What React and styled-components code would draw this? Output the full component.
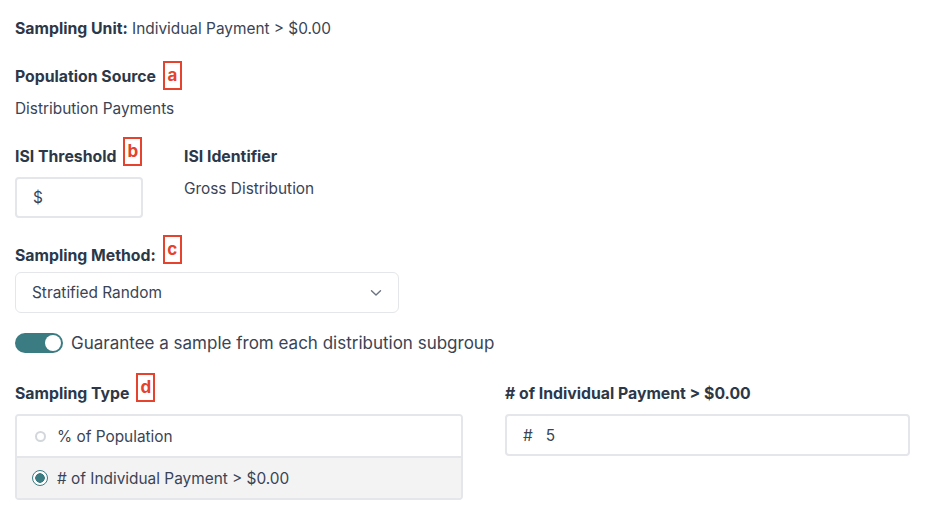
import styled, { createGlobalStyle } from "styled-components";

const GlobalStyle = createGlobalStyle`
  body {
    margin: 0;
    background: #ffffff;
    font-family: Inter, "Noto Sans", sans-serif;
    color: #3a4454;
  }
`;

const Page = styled.div`
  padding: 19px 15px 0;
  width: 895px;
`;

const Line = styled.div`
  font-size: 15.4px;
  line-height: 20px;
  margin-top: ${(p) => p.$top || 0}px;
`;

const Strong = styled.span`
  font-weight: 700;
  font-size: 15.8px;
  color: #2c3848;
`;

const Label = styled.div`
  position: relative;
  display: inline-block;
  font-size: 15.8px;
  line-height: 20px;
  font-weight: 700;
  color: #2c3848;
  margin-top: ${(p) => p.$top || 0}px;
`;

const Badge = styled.span`
  position: absolute;
  left: calc(100% + ${(p) => p.$gap || 7}px);
  top: ${(p) => p.$offset}px;
  width: 15px;
  height: 25px;
  border: 2px solid #e5432d;
  color: #e5432d;
  font-size: 17px;
  font-weight: 700;
  line-height: 24px;
  text-align: center;
`;

const Pair = styled.div`
  display: flex;
  gap: 41px;
  margin-top: 28px;
`;

const Field = styled.div`
  display: flex;
  flex-direction: column;
  align-items: flex-start;
`;

const TextBox = styled.div`
  box-sizing: border-box;
  display: flex;
  align-items: center;
  gap: 13px;
  width: ${(p) => p.$width || "100%"};
  height: ${(p) => p.$height || 41}px;
  margin-top: ${(p) => p.$top ?? 10}px;
  padding: 0 16px;
  border: 2px solid #e4e6ea;
  border-radius: 4px;
  font-size: 15.4px;
  color: #3a4454;
`;

const Select = styled.div`
  box-sizing: border-box;
  display: flex;
  align-items: center;
  justify-content: space-between;
  width: 384px;
  height: 41px;
  margin-top: 6px;
  padding: 0 16px 0 16px;
  border: 1px solid #e4e6ea;
  border-radius: 6px;
  font-size: 15.4px;
  color: #3a4454;
`;

const ToggleRow = styled.div`
  display: flex;
  align-items: center;
  gap: 8px;
  margin-top: 19px;
  font-size: 17px;
  line-height: 22px;
  color: #3a4454;
`;

const Track = styled.div`
  display: flex;
  align-items: center;
  justify-content: ${(p) => (p.$on ? "flex-end" : "flex-start")};
  box-sizing: border-box;
  width: 48px;
  height: 20px;
  padding: 2px;
  border-radius: 10px;
  background: ${(p) => (p.$on ? "#3b7b82" : "#d1d5db")};
`;

const Knob = styled.div`
  width: 16px;
  height: 16px;
  border-radius: 50%;
  background: #ffffff;
`;

const Columns = styled.div`
  display: grid;
  grid-template-columns: 448px 1fr;
  column-gap: 42px;
  margin-top: 30px;
`;

const RadioGroup = styled.div`
  margin-top: 10px;
  border: 2px solid #e4e6ea;
  border-radius: 4px;
  overflow: hidden;
`;

const Option = styled.div`
  display: flex;
  align-items: center;
  gap: 9px;
  height: 40px;
  padding-left: 15px;
  font-size: 15.4px;
  color: #3a4454;
  background: ${(p) => (p.$checked ? "#f3f3f4" : "#ffffff")};
  & + & {
    border-top: 2px solid #e4e6ea;
  }
`;

const Dot = styled.span`
  box-sizing: border-box;
  display: flex;
  align-items: center;
  justify-content: center;
  width: 16px;
  height: 16px;
  &::before {
    content: "";
    box-sizing: border-box;
    width: ${(p) => (p.$checked ? 16 : 11)}px;
    height: ${(p) => (p.$checked ? 16 : 11)}px;
    border-radius: 50%;
    border: ${(p) => (p.$checked ? "1.5px solid #3b7b82" : "2px solid #d3d6db")};
    background: ${(p) =>
      p.$checked ? "radial-gradient(circle, #3b7b82 0 4.5px, #ffffff 5px)" : "#ffffff"};
  }
`;

function Chevron() {
  return (
    <svg width="12" height="8" viewBox="0 0 12 8" fill="none">
      <path d="M1.5 1.8 6 6 10.5 1.8" stroke="#6b7280" strokeWidth="1.4" strokeLinecap="round" strokeLinejoin="round" />
    </svg>
  );
}

export default function App() {
  return (
    <Page>
      <GlobalStyle />
      <Line>
        <Strong>Sampling Unit:</Strong> Individual Payment &gt; $0.00
      </Line>

      <div>
        <Label $top={28}>
          Population Source
          <Badge $offset={-6}>a</Badge>
        </Label>
      </div>
      <Line $top={12}>Distribution Payments</Line>

      <Pair>
        <Field>
          <Label>
            ISI Threshold
            <Badge $offset={-10}>b</Badge>
          </Label>
          <TextBox $width="128px">$</TextBox>
        </Field>
        <Field>
          <Label>ISI Identifier</Label>
          <Line $top={12}>Gross Distribution</Line>
        </Field>
      </Pair>

      <div>
        <Label $top={28}>
          Sampling Method:
          <Badge $offset={-11}>c</Badge>
        </Label>
      </div>
      <Select>
        Stratified Random
        <Chevron />
      </Select>

      <ToggleRow>
        <Track $on>
          <Knob />
        </Track>
        Guarantee a sample from each distribution subgroup
      </ToggleRow>

      <Columns>
        <Field>
          <Label>
            Sampling Type
            <Badge $offset={-11}>d</Badge>
          </Label>
        </Field>
        <Field>
          <Label># of Individual Payment &gt; $0.00</Label>
        </Field>
        <RadioGroup>
          <Option>
            <Dot />% of Population
          </Option>
          <Option $checked>
            <Dot $checked /># of Individual Payment &gt; $0.00
          </Option>
        </RadioGroup>
        <div>
          <TextBox $height={42} $top={10}>
            <span>#</span>
            <span>5</span>
          </TextBox>
        </div>
      </Columns>
    </Page>
  );
}
